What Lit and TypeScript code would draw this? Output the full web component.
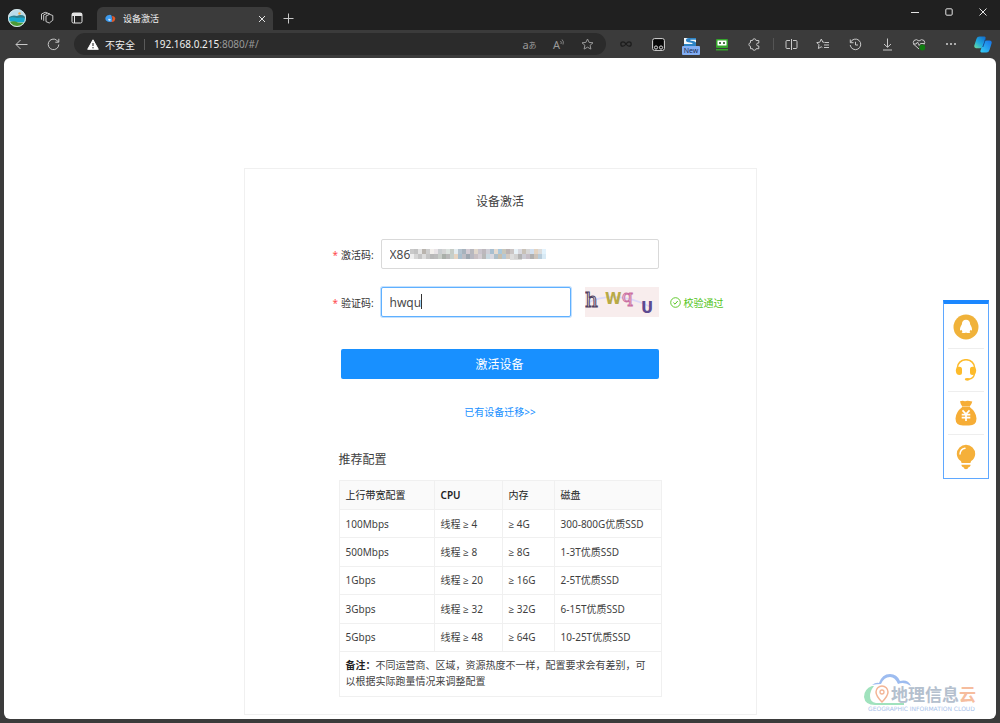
import { LitElement, html, css, svg } from "lit";
import { customElement } from "lit/decorators.js";

const icon = (w: number, h: number, body: unknown, cls = "") =>
  html`<svg class="ico ${cls}" width=${w} height=${h} viewBox="0 0 ${w} ${h}" aria-hidden="true">${body}</svg>`;

const icons = {
  avatar: icon(18, 18, svg`
    <circle cx="9" cy="9" r="9" fill="#b9dcea"/>
    <path d="M1 8 Q5 5.500 9 7 Q13 5 17 7.500 L17.500 11 H.5Z" fill="#2f7f8d"/>
    <path d="M.3 9 Q5 7.500 9 9 Q14 8 17.800 9.500 L17 13 Q9 14 1 12Z" fill="#18a9cf"/>
    <path d="M1.500 13 Q6 11.500 10 13.500 Q14 14 16.500 13.800 A9 9 0 0 1 1.500 13Z" fill="#4c9a36"/>
    <circle cx="11.500" cy="4.500" r="1.200" fill="#f0a545"/>
    <circle cx="9" cy="9" r="8.500" fill="none" stroke="#d6e4e6" stroke-width="1"/>`, "plain"),
  workspaces: icon(14, 14, svg`
    <path d="M6 5 L9.500 3.300 L12.800 4.500 V9.200 L9.300 12 L6 10.600Z"/>
    <path d="M3.700 9.800 V3.900 L7.500 2.200 L10 3 M1.500 8.700 V3 L5.200 1.300 L7.500 2"/>`),
  tabs: icon(12, 12, svg`
    <rect x="1" y="1" width="10" height="10" rx="1.500"/><path d="M1 2.500 H11" stroke-width="3"/><path d="M3.500 3 V11"/>`, "bright"),
  favicon: icon(11, 9, svg`
    <path d="M4 1 A4 3.600 0 0 0 1 6.500 Q4 9 7.500 7.500 L6.500 1.500 Q5.500 .5 4 1Z" fill="#3d9cf0"/>
    <path d="M7 2 Q10 2 10.300 4.500 Q10 8 6.500 8 Q8.500 5 7 2Z" fill="#e2582a"/>
    <path d="M3 5 Q5 4 6 6 L4 7Z" fill="#cfe9ff"/>`, "plain"),
  close: icon(8, 8, svg`<path d="M1 1 L7 7 M7 1 L1 7"/>`, "bright"),
  plus: icon(11, 11, svg`<path d="M5.500 .5 V10.500 M.5 5.500 H10.500"/>`),
  minimize: icon(8, 8, svg`<path d="M0 4.500 H8"/>`, "bright"),
  maximize: icon(8, 8, svg`<rect x=".8" y=".8" width="6.400" height="6.400" rx="1"/>`, "bright"),
  winClose: icon(8, 8, svg`<path d="M.5 .5 L7.500 7.500 M7.500 .5 L.5 7.500"/>`, "bright"),
  back: icon(13, 11, svg`<path d="M12.500 5.500 H1 M5.500 1 L1 5.500 L5.500 10"/>`),
  reload: icon(13, 13, svg`<path d="M11.800 6.500 A5.300 5.300 0 1 1 9.500 2 L11.500 4 M11.800 .8 V4.200 H8.300"/>`),
  warning: icon(12, 11, svg`
    <path d="M6 .8 L11.300 10.300 H.7Z" fill="#fff" stroke="#fff" stroke-linejoin="round"/>
    <path d="M6 4 V7" stroke="#2b2b2b" stroke-width="1.100"/><circle cx="6" cy="8.700" r=".7" fill="#2b2b2b"/>`, "plain"),
  star: icon(13, 12, svg`<path d="M6.500 1 L8.100 4.400 L12 4.800 L9.100 7.300 L9.900 11.100 L6.500 9.200 L3.100 11.100 L3.900 7.300 L1 4.800 L4.900 4.400Z"/>`, "dim"),
  infinity: icon(12, 8, svg`<path d="M6 4 Q4.500 1.800 3 1.800 A2.200 2.200 0 0 0 3 6.200 Q4.500 6.200 6 4 Q7.500 1.800 9 1.800 A2.200 2.200 0 0 1 9 6.200 Q7.500 6.200 6 4Z" stroke="#1d1d1d" stroke-width="1.300"/>`),
  monkey: icon(13, 13, svg`
    <rect x=".6" y=".6" width="11.800" height="11.800" rx="2" fill="#070707" stroke="#d8d8d8"/>
    <circle cx="4" cy="9.500" r="1.600" fill="#111" stroke="#eee" stroke-width=".9"/><circle cx="9" cy="9.500" r="1.600" fill="#111" stroke="#eee" stroke-width=".9"/>`, "plain"),
  sLogo: icon(14, 12, svg`
    <rect x="1" y="0" width="12" height="12" fill="#f4f8fb"/>
    <path d="M13 0 H6 Q2.500 .3 3 2.800 Q3.500 4.500 7 4.500 Q10 4.700 9.500 6 H1 V8 H13 V4.500 Q12 3 8 2.800 Q6.500 2.500 7.500 1.800 H13Z" fill="#2d83c4"/>`, "plain"),
  robot: icon(12, 13, svg`
    <rect x="0" y="1" width="12" height="9" rx="1" fill="#35a52c"/><rect x="1.500" y="2.500" width="9" height="5" fill="#fff"/>
    <path d="M3 4.200 H5 V5.800 H3Z M7 4.200 H9 V5.800 H7Z" fill="#164c12"/><rect x="0" y="11" width="12" height="1.500" fill="#35a52c"/>`, "plain"),
  puzzle: icon(13, 13, svg`<path d="M4.500 2.500 Q4.700 .8 6.300 .8 Q7.900 .8 8.100 2.500 H10.800 V5 Q8.600 4.800 8.600 6.500 Q8.600 8.200 10.800 8 V10.700 H8.100 Q7.900 12.300 6.300 12.300 Q4.700 12.300 4.500 10.700 H2.500 V8.300 Q.9 8.100 .9 6.500 Q.9 4.900 2.500 4.700 V2.500Z"/>`),
  split: icon(13, 11, svg`<path d="M5 1.500 H2 Q1 1.500 1 2.500 V8.500 Q1 9.500 2 9.500 H5 M8 1.500 H11 Q12 1.500 12 2.500 V8.500 Q12 9.500 11 9.500 H8 M6.500 0 V11"/>`),
  favorites: icon(14, 12, svg`<path d="M8.200 4.200 L6.800 4.200 L5.300 1 L3.800 4.200 L.8 4.600 L3 6.800 L2.400 10.500 L5.300 8.800 L6.300 9.400 M8.500 4.500 H13 M8 7 H13 M8 9.500 H13"/>`),
  history: icon(13, 13, svg`<path d="M1.500 4.500 A5.300 5.300 0 1 1 1.200 7 M1.300 1.500 V4.700 H4.500 M6.500 3.800 V7 H9"/>`),
  download: icon(11, 13, svg`<path d="M5.500 .5 V9 M2 6 L5.500 9.300 L9 6 M1 12 H10"/>`),
  health: icon(14, 13, svg`
    <path d="M7 11 L2 6.500 Q.5 4.500 2 2.500 Q4.500 .5 7 3 Q9.500 .5 12 2.500 Q13.500 4.500 12 6.500 M1 6 H4.200 L5.500 4 L7.200 7.500 L8.500 5.500 H12.500"/>
    <circle cx="10.300" cy="9.500" r="2.900" fill="#107c10" stroke="none"/>`),
  more: icon(12, 4, svg`<circle cx="2" cy="2" r="1" fill="#d5d5d5"/><circle cx="6" cy="2" r="1" fill="#d5d5d5"/><circle cx="10" cy="2" r="1" fill="#d5d5d5"/>`, "plain"),
  copilot: icon(18, 17, svg`
    <defs><linearGradient id="ca" x1="0" y1="1" x2=".8" y2="0"><stop offset="0" stop-color="#6fe09a"/><stop offset=".5" stop-color="#1fa9dd"/><stop offset="1" stop-color="#1473cf"/></linearGradient>
    <linearGradient id="cb" x1="0" y1="1" x2="1" y2="0"><stop offset="0" stop-color="#35d0f4"/><stop offset="1" stop-color="#1670e8"/></linearGradient></defs>
    <path d="M5.500 .5 H10.500 Q12 .8 11.500 2.500 L8.700 10.500 Q8 12.300 6.200 12.300 H2 Q-.2 12 .3 9.500 L2.500 2.800 Q3.200 .5 5.500 .5Z" fill="url(#ca)"/>
    <path d="M12.500 4.500 H15.700 Q18.200 4.800 17.600 7.300 L15.500 14 Q14.700 16.500 12.500 16.500 H7.500 Q6 16.200 6.500 14.500 L9.200 6.500 Q10 4.500 12.500 4.500Z" fill="url(#cb)"/>
    <path d="M11.600 2.800 L8.800 11" stroke="#164d94" stroke-width="1"/>`, "plain"),
  check: icon(11, 11, svg`<circle cx="5.500" cy="5.500" r="4.800" stroke="#52c41a" stroke-width=".9"/><path d="M3.400 5.600 L5 7.200 L7.700 4" stroke="#52c41a"/>`),
  qq: icon(26, 26, svg`
    <circle cx="13" cy="13" r="12.500" fill="#f0b23a"/>
    <path d="M13 5.700 Q17 5.700 17.200 10.500 Q19.500 14.300 18.900 16.200 Q18.400 17 17.500 15.700 Q17.300 16.800 16.500 17.500 Q18.300 18.700 16 19 Q14 19.200 13 18.500 Q12 19.200 10 19 Q7.700 18.700 9.500 17.500 Q8.700 16.800 8.500 15.700 Q7.600 17 7.100 16.200 Q6.500 14.300 8.800 10.500 Q9 5.700 13 5.700Z" fill="#fff"/>`, "plain"),
  headset: icon(22, 22, svg`
    <path d="M2.300 9 A8.700 8.300 0 0 1 19.700 9" fill="none" stroke="#fdbb2b" stroke-width="1.500"/>
    <path d="M5.700 8 Q1 7.200 .8 11.500 Q1 16 4.500 16 Q7 16 7 13.500 V10 Q7 8.400 5.700 8Z M16.300 8 Q21 7.200 21.200 11.500 Q21 16 17.500 16 Q15 16 15 13.500 V10 Q15 8.400 16.300 8Z" fill="#fdbb2b"/>
    <path d="M19.500 14.500 Q19 19.500 13.500 20.200" fill="none" stroke="#fdbb2b" stroke-width="1.500"/><ellipse cx="12.300" cy="20.300" rx="2.500" ry="1.400" fill="#fdbb2b"/>`, "plain"),
  moneybag: icon(22, 26, svg`
    <path d="M5 1.200 Q8 .2 10 1.300 Q12 .2 14.500 1 L17.300 1.500 Q16.500 4.500 15 6 V7.200 Q21.300 12 21.500 18.500 Q21.500 25.500 14 25.500 H8 Q.5 25.500 .5 18.500 Q.7 12 7 7.200 V6 Q5.500 4 5 1.200Z" fill="#f6ad36"/>
    <path d="M6 6.500 H16" stroke="#fff" stroke-width=".7" opacity=".6"/>
    <path d="M7.500 10.300 L11 14 L14.500 10.300 M11 14 V21 M6.700 14.600 H15.300 M6.700 17.700 H15.300" fill="none" stroke="#fff" stroke-width="1.700"/>`, "plain"),
  bulb: icon(20, 26, svg`
    <path d="M10 .7 A9.200 9.200 0 0 1 19.200 10 Q19 14.500 15.200 17 Q14.500 18 14.500 19 H5.500 Q5.500 18 4.800 17 Q1 14.500 .8 10 A9.200 9.200 0 0 1 10 .7Z M5.500 20.700 H14.500 V21.500 Q14 23 12.500 23.300 Q12 25.300 10 25.300 Q8 25.300 7.500 23.300 Q6 23 5.500 21.500Z" fill="#f5b03a"/>
    <path d="M4 10 Q4.300 5.200 9 4.300" fill="none" stroke="#fff" stroke-width="1.400" stroke-linecap="round"/>`, "plain"),
};

const mosaicColours = [
  "c9c9c9 c2c2c2 e3e3e3 b9b4ae cdcdcd f2efec e8e3e6 c9cdd0 d4d4d4 dce3df c6ccc6 e3ecf0 b5c3cf a7b3bd d4ccd4 b8b8be e1d7cb c9c5cd bdb8bd cfcfd7 a9bfd0 e5dacf a9c8dc c8c6ba bcb4b4 cac5c5 e8f2f8 d9d9e0 c9c2b8 d7d7d7 d1dfef e3d3c1 dcdcdc e2f2fc",
  "eeeeee d5d5d5 c4c4c4 dcdcdc c5c5c5 b8b8b8 bcbcbc c8cdc8 a9afa9 b8b8b8 c6cfca e6d4c1 a9bfce bdbdc4 9ea7b0 b8b8c1 c9c0c3 d4ced4 b9b9b9 c9d8e0 d8d8e0 aebfc9 c8bfae b3c8d8 d2c9c0 dddddd d2d2d2 b3b3b3 cbcbd3 c6bec6 b0b0b0 ccc3ba b8ccda d8eaf5",
].map((r) => r.split(" "));

const specs = [
  ["100Mbps", "线程 ≥ 4", "≥ 4G", "300-800G优质SSD"],
  ["500Mbps", "线程 ≥ 8", "≥ 8G", "1-3T优质SSD"],
  ["1Gbps", "线程 ≥ 20", "≥ 16G", "2-5T优质SSD"],
  ["3Gbps", "线程 ≥ 32", "≥ 32G", "6-15T优质SSD"],
  ["5Gbps", "线程 ≥ 48", "≥ 64G", "10-25T优质SSD"],
];

const base = css`
  * { box-sizing: border-box; }
  button { border: 0; padding: 0; margin: 0; background: none; color: inherit; font: inherit; display: flex; align-items: center; justify-content: center; }
  .ico { display: block; flex: none; fill: none; stroke: #c8c8c8; stroke-width: 1; }
  .ico.bright { stroke: #e4e4e4; }
  .ico.dim { stroke: #999; }
  .ico.plain { stroke: none; }
`;

@customElement("browser-chrome")
export class BrowserChrome extends LitElement {
  static styles = [base, css`
    :host { display: block; color: #f0f0f0; }
    .tabs { display: flex; height: 30px; padding-left: 2px; background: #202020; }
    .tool { width: 30px; margin-top: 6px; }
    .tab { display: flex; align-items: center; width: 176px; height: 23px; margin: 7px 0 0 5px; padding: 0 4px 0 8px; background: #3b3b3b; border-radius: 6px 6px 0 0; }
    .title { flex: 1; margin-left: 7px; font-size: 9px; }
    .tab button { width: 15px; height: 15px; }
    .window { display: flex; margin-left: auto; height: 24px; }
    .window button { width: 34px; }
    .bar { display: flex; align-items: center; height: 28px; padding: 0 1px 0 5px; background: #3b3b3b; }
    .bar button { width: 32px; height: 24px; flex: none; }
    .address { display: flex; flex: 1; align-items: center; height: 22px; margin: 0 4px 0 5px; padding: 0 4px 0 13px; border-radius: 11px; background: #2b2b2b; font-size: 10px; white-space: nowrap; }
    .address .action { width: 29px; }
    .address .site { width: auto; gap: 6px; }
    .sep { width: 1px; height: 11px; margin: 0 9px; background: #5a5a5a; }
    .url { flex: 1; }
    .rest { color: #999; }
    .letters { color: #999; font-size: 11px; }
    .letters svg { display: inline-block; vertical-align: 4px; }
    .jp { font-size: 8px; }
    .split { width: 4px; height: 12px; border-right: 1px solid #555; margin-right: 1px; }
    .bar .badged { position: relative; }
    .badge { position: absolute; left: 8px; top: 14px; width: 18px; height: 9px; border-radius: 1px; background: #83aef3; color: #1c2b52; font-size: 7px; line-height: 9px; text-align: center; }
  `];

  render() {
    return html`
      <div class="tabs">
        <button class="tool" aria-label="个人资料">${icons.avatar}</button>
        <button class="tool" aria-label="工作区">${icons.workspaces}</button>
        <button class="tool" aria-label="标签页操作">${icons.tabs}</button>
        <div class="tab">
          ${icons.favicon}<span class="title">设备激活</span>
          <button aria-label="关闭标签页">${icons.close}</button>
        </div>
        <button class="tool" aria-label="新建标签页">${icons.plus}</button>
        <div class="window">
          <button aria-label="最小化">${icons.minimize}</button>
          <button aria-label="最大化">${icons.maximize}</button>
          <button aria-label="关闭">${icons.winClose}</button>
        </div>
      </div>
      <div class="bar">
        <button aria-label="后退">${icons.back}</button>
        <button aria-label="刷新">${icons.reload}</button>
        <div class="address">
          <button class="site">${icons.warning}<span>不安全</span></button>
          <span class="sep"></span>
          <span class="url">192.168.0.215<span class="rest">:8080/#/</span></span>
          <button class="action letters" aria-label="翻译">a<span class="jp">あ</span></button>
          <button class="action letters" aria-label="朗读"><span>A${icon(4, 6, svg`<path d="M.5 2 Q1.800 3 1 5 M2 .5 Q4.200 2.500 3 5.500" stroke="#999" stroke-width=".8"/>`)}</span></button>
          <button class="action" aria-label="收藏">${icons.star}</button>
        </div>
        <button aria-label="扩展一">${icons.infinity}</button>
        <button aria-label="扩展二">${icons.monkey}</button>
        <button class="badged">${icons.sLogo}<span class="badge">New</span></button>
        <button aria-label="扩展三">${icons.robot}</button>
        <button aria-label="扩展">${icons.puzzle}</button>
        <span class="split"></span>
        <button aria-label="拆分屏幕">${icons.split}</button>
        <button aria-label="收藏夹">${icons.favorites}</button>
        <button aria-label="历史记录">${icons.history}</button>
        <button aria-label="下载">${icons.download}</button>
        <button aria-label="浏览器概要">${icons.health}</button>
        <button aria-label="更多">${icons.more}</button>
        <button aria-label="Copilot">${icons.copilot}</button>
      </div>`;
  }
}

@customElement("activation-card")
export class ActivationCard extends LitElement {
  static styles = [base, css`
    :host { display: block; box-sizing: border-box; width: 100%; max-width: 513px; border: 1px solid #f0f0f0; padding: 23px 0 17px; color: #3f3f3f; font-size: 10px; }
    h1, h2 { margin: 0; font-size: 12px; line-height: 20px; font-weight: 400; }
    h1 { text-align: center; }
    form { display: grid; grid-template-columns: 48px minmax(0, 278px) 1fr; row-gap: 18px; align-items: center; margin-top: 27px; padding-left: 88px; }
    label { grid-column: 1; color: #333; white-space: nowrap; }
    .star { color: #ff4d4f; margin-right: 3px; }
    .field { position: relative; grid-column: 2; }
    .code { grid-column: 2; display: flex; gap: 14px; }
    .code .field { flex: 1; }
    input { display: block; width: 100%; height: 30px; margin: 0; padding: 0 8px; border: 1px solid #d9d9d9; border-radius: 2px; outline: 0; background: #fff; color: #4a4a4a; font: inherit; font-size: 12px; }
    .active { border-color: #5fb0ff; box-shadow: 0 0 0 1px #c3e1ff; }
    .mosaic { position: absolute; left: 29px; top: 9px; }
    .caret { position: absolute; left: 40px; top: 7px; width: 1px; height: 15px; background: #333; }
    .captcha { width: 74px; height: 30px; }
    .passed { display: flex; align-items: center; gap: 3px; padding-left: 11px; color: #52c41a; white-space: nowrap; }
    .submit { grid-column: 1 / 3; height: 30px; margin: 14px 0 0 8px; border-radius: 2px; background: #1890ff; color: #fff; font-size: 12px; }
    .migrate { display: block; width: max-content; margin: 23px auto 28px; color: #1890ff; line-height: 20px; text-decoration: none; }
    .specs { width: 323px; max-width: 100%; margin-left: 94px; }
    table { width: 100%; height: 217px; margin-top: 10px; border-collapse: collapse; table-layout: fixed; line-height: 16px; }
    th, td { border: 1px solid #f0f0f0; padding: 5px 6px; text-align: left; }
    th { height: 29px; background: #fafafa; font-weight: 400; white-space: nowrap; color: #222; }
    .c1 { width: 95px; } .c2 { width: 68px; font-weight: 600; } .c3 { width: 52px; }
    .note { height: 45px; vertical-align: top; }
    b { font-weight: 700; color: #222; }
  `];

  render() {
    return html`
      <h1>设备激活</h1>
      <form @submit=${(e: Event) => e.preventDefault()}>
        <label for="activation"><span class="star">*</span>激活码:</label>
        <div class="field">
          <input id="activation" type="text" value="X86" />
          <svg class="mosaic" width="137" height="12" aria-hidden="true">
            ${mosaicColours.map((row, y) => row.map((c, x) => svg`<rect x=${x * 4} y=${y * 5 + 1} width="4" height="5" fill="#${c}"/>`))}
            <path d="M100 11h12v1h-12z" fill="#ddd"/>
          </svg>
        </div>
        <label for="captcha"><span class="star">*</span>验证码:</label>
        <div class="code">
          <div class="field">
            <input id="captcha" class="active" type="text" value="hwqu" />
            <span class="caret"></span>
          </div>
          <svg class="captcha" viewBox="0 0 74 30" role="img" aria-label="验证码图片">
            <rect width="74" height="30" fill="#f8eded"/>
            <path d="M2 16 Q30 2 66 20" fill="none" stroke="#dcd9f7" stroke-width="1.500"/>
            <g font-family="'DejaVu Serif', serif">
              <text x="0" y="20" font-size="20" fill="#f8eded" stroke="#50405f" stroke-width="1">h</text>
              <text x="20" y="17" font-size="15" font-family="'DejaVu Sans', sans-serif" font-weight="700" fill="#b8aa46">W</text>
              <text x="37" y="15" font-size="17" fill="#f8eded" stroke="#ca6ea2" stroke-width="1">q</text>
              <text x="56" y="26" font-size="15" font-family="'DejaVu Sans', sans-serif" font-weight="700" fill="#5d4a91">U</text>
            </g>
          </svg>
        </div>
        <span class="passed">${icons.check}校验通过</span>
        <button class="submit" type="submit">激活设备</button>
      </form>
      <a class="migrate" href="#migrate">已有设备迁移&gt;&gt;</a>
      <section class="specs">
        <h2>推荐配置</h2>
        <table>
          <thead><tr><th class="c1">上行带宽配置</th><th class="c2">CPU</th><th class="c3">内存</th><th>磁盘</th></tr></thead>
          <tbody>
            ${specs.map((r) => html`<tr>${r.map((c) => html`<td>${c}</td>`)}</tr>`)}
            <tr><td class="note" colspan="4"><b>备注：</b>不同运营商、区域，资源热度不一样，配置要求会有差别，可以根据实际跑量情况来调整配置</td></tr>
          </tbody>
        </table>
      </section>`;
  }
}

@customElement("app-root")
export class AppRoot extends LitElement {
  static styles = [base, css`
    :host { display: flex; flex-direction: column; box-sizing: border-box; min-height: 100vh; background: #3b3b3b; font-family: "Noto Sans", "Open Sans", "Noto Sans CJK SC", sans-serif; line-height: normal; }
    .page { position: relative; display: flex; flex: 1; justify-content: center; align-items: flex-start; margin: 0 4px 4px; padding: 110px 0 4px; border-radius: 6px; background: #fff; }
    .side { position: absolute; right: 7px; top: 242px; width: 46px; padding: 2px 4px 0; border: 1px solid #5fa8ff; border-top: 4px solid #1b87ff; background: #fff; }
    .side button { width: 100%; height: 43px; border-bottom: 1px solid #eee; }
    .side button:last-child { border-bottom: 0; }
    .mark { position: absolute; right: 18px; bottom: 7px; }
  `];

  render() {
    return html`
      <browser-chrome></browser-chrome>
      <main class="page">
        <activation-card></activation-card>
        <nav class="side" aria-label="服务">
          <button aria-label="QQ">${icons.qq}</button>
          <button aria-label="客服">${icons.headset}</button>
          <button aria-label="收益">${icons.moneybag}</button>
          <button aria-label="帮助">${icons.bulb}</button>
        </nav>
        <svg class="mark" width="116" height="40" viewBox="0 0 116 40" role="img" aria-label="地理信息云">
          <path d="M10 13 Q14 10 17 11 Q20 2 28 2 Q35 2 38 9 Q46 7 49 14 Q42 9 36 12 Q33 5 28 5 Q22 5 19 12 Q15 12 10 13Z" fill="#9dbcf0"/>
          <path d="M10 14 Q2 17 2 25 Q3 33 13 33 H42 V31 H14 Q8 30 8 24 Q8 19 12 14Z" fill="#a0e2bd"/>
          <path d="M20 30 Q14 24 14 20 A6 6 0 0 1 26 20 Q26 24 20 30Z" fill="none" stroke="#f3b596" stroke-width="1.500"/>
          <circle cx="20" cy="20" r="2" fill="none" stroke="#f3b596" stroke-width="1.300"/>
          <g font-family="'Noto Sans CJK SC', sans-serif" font-weight="700" font-size="17">
            <text x="29" y="29" fill="#b4c0ce">地理信息</text><text x="97" y="29" fill="#f6bd9e">云</text>
          </g>
          <text x="6" y="39" font-family="'DejaVu Sans', sans-serif" font-size="6" fill="#a9c2ea">GEOGRAPHIC INFORMATION CLOUD</text>
        </svg>
      </main>`;
  }
}
